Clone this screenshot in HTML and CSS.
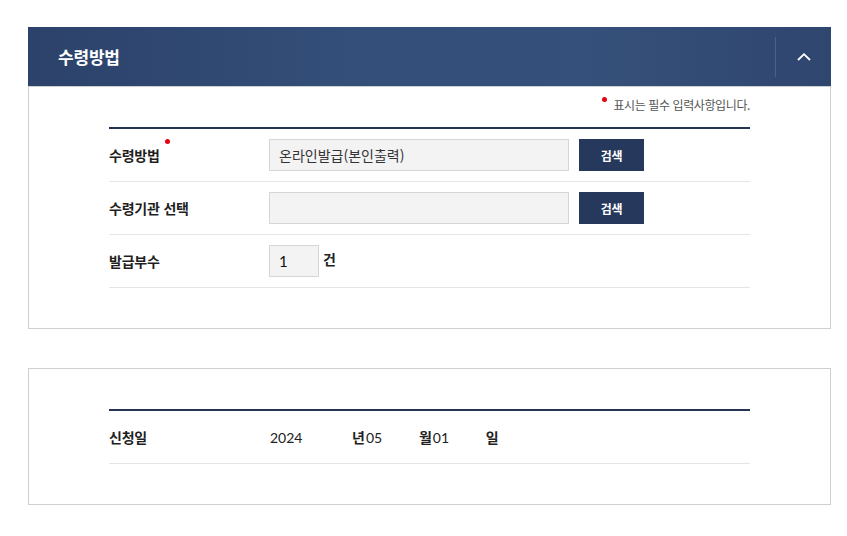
FILE: index.html
```html
<!DOCTYPE html>
<html lang="ko">
<head>
<meta charset="utf-8">
<title>수령방법</title>
<link rel="stylesheet" href="styles.css">
</head>
<body>
<div class="page">
  <section class="panel">
    <header class="panel-head">
      <h2 class="panel-title">수령방법</h2>
      <button class="toggle" type="button" aria-label="접기">
        <svg width="14" height="8" viewBox="0 0 14 8"><polyline points="1,7 7,1.2 13,7" fill="none" stroke="#fff" stroke-width="1.8"/></svg>
      </button>
    </header>
    <div class="panel-body">
      <p class="req-note"><span class="dot"></span>표시는 필수 입력사항입니다.</p>
      <table class="form">
        <tr>
          <th><span class="label">수령방법</span><span class="dot dot-label"></span></th>
          <td>
            <div class="field">
              <span class="input wide">온라인발급(본인출력)</span>
              <button class="btn" type="button">검색</button>
            </div>
          </td>
        </tr>
        <tr>
          <th><span class="label">수령기관 선택</span></th>
          <td>
            <div class="field">
              <span class="input wide"></span>
              <button class="btn" type="button">검색</button>
            </div>
          </td>
        </tr>
        <tr>
          <th><span class="label">발급부수</span></th>
          <td>
            <div class="field">
              <span class="input small num-font">1</span>
              <span class="unit">건</span>
            </div>
          </td>
        </tr>
      </table>
    </div>
  </section>

  <section class="panel panel-plain">
    <div class="panel-body">
      <table class="form">
        <tr>
          <th><span class="label">신청일</span></th>
          <td>
            <div class="date">
              <span class="num year">2024</span><span class="unit-d">년</span><span class="num md">05</span><span class="unit-d">월</span><span class="num md">01</span><span class="unit-d">일</span>
            </div>
          </td>
        </tr>
      </table>
    </div>
  </section>
</div>
</body>
</html>
```

FILE: styles.css
```css
* { box-sizing: border-box; }
html, body { margin: 0; padding: 0; background: #fff; }
body {
  font-family: "Noto Sans CJK KR", "Noto Sans", sans-serif;
  color: #222;
}
.page {
  padding: 27px 0 0 28px;
  width: 847px;
}
.panel {
  width: 803px;
}
.panel + .panel { margin-top: 39px; }

.panel-head {
  height: 59px;
  display: flex;
  align-items: center;
  justify-content: space-between;
  padding-left: 30px;
  background: linear-gradient(90deg, #2c426b 0%, #34507a 45%, #35507a 70%, #2f466f 100%);
}
.panel-title {
  margin: 0;
  font-size: 17px;
  font-weight: 700;
  color: #fff;
  letter-spacing: -0.2px;
  line-height: 20px;
}
.toggle {
  height: 40px;
  width: 56px;
  border: 0;
  border-left: 1px solid #4b6189;
  background: transparent;
  padding: 0;
  display: flex;
  align-items: center;
  justify-content: center;
  padding-left: 1px;
}
.toggle svg { display: block; }

.panel-body {
  border: 1px solid #cfcfcf;
  padding: 0 80px 40px;
}
.panel-plain .panel-body { padding-top: 40px; }

.req-note {
  margin: 0;
  padding-top: 8px;
  height: 40px;
  line-height: 20px;
  text-align: right;
  font-size: 12px;
  color: #555;
  letter-spacing: -0.4px;
}
.dot {
  display: inline-block;
  width: 5px;
  height: 5px;
  border-radius: 50%;
  background: #e60012;
  vertical-align: top;
  margin-top: 2px;
  margin-right: 6px;
}
.dot-label {
  margin: 0 0 0 5px;
  position: relative;
  top: 0px;
}

.form {
  width: 100%;
  border-collapse: collapse;
  border-top: 2px solid #243452;
}
.form tr { border-bottom: 1px solid #e5e5e5; }
.form th {
  width: 160px;
  text-align: left;
  padding: 10px 0;
  vertical-align: middle;
  font-weight: 700;
}
.form td { padding: 10px 0; }
.label {
  font-size: 14px;
  letter-spacing: -0.2px;
  line-height: 32px;
  color: #1f1f1f;
}
.field {
  display: flex;
  align-items: center;
  height: 32px;
}
.input {
  height: 32px;
  background: #f3f3f3;
  border: 1px solid #d6d6d6;
  font-size: 14px;
  line-height: 30px;
  padding: 0 9px;
  color: #333;
}
.input.wide { width: 300px; }
.input.small { width: 50px; }
.num-font { font-family: Lato, "Noto Sans", sans-serif; font-size: 15px; color: #111; }
.btn {
  margin-left: 10px;
  width: 65px;
  height: 32px;
  border: 0;
  background: #26395c;
  color: #fff;
  font-family: "Noto Sans CJK KR", sans-serif;
  font-size: 12px;
  font-weight: 700;
  padding: 0;
  letter-spacing: -0.3px;
}
.unit {
  margin-left: 4px;
  font-size: 14px;
  font-weight: 700;
  position: relative;
  top: -2px;
}

.date {
  display: flex;
  align-items: center;
  height: 32px;
}
.num {
  font-family: Lato, "Noto Sans", sans-serif;
  font-size: 14px;
  color: #222;
  padding-left: 1px;
}
.num.year { width: 83px; }
.num.md { width: 54px; padding-left: 1px; }
.unit-d {
  font-size: 14px;
  font-weight: 700;
  color: #222;
}
```
